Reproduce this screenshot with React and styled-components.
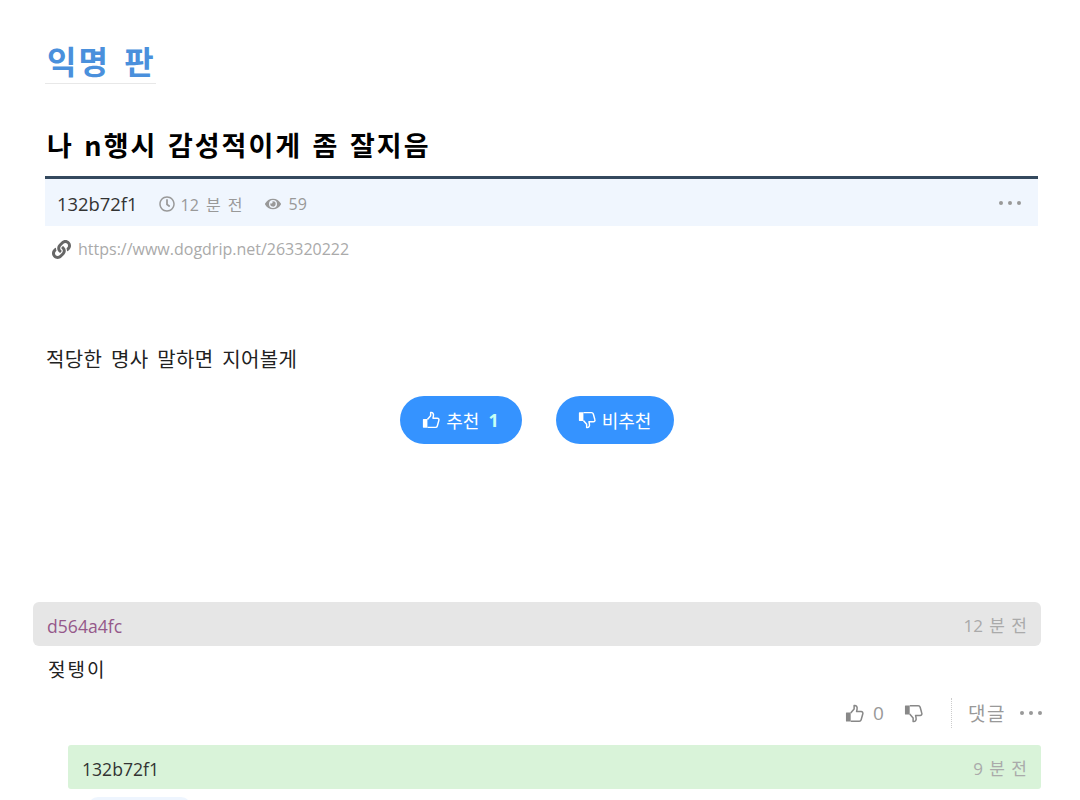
import styled, { createGlobalStyle } from "styled-components";
import { FaRegClock, FaEye, FaLink } from "react-icons/fa";

const GlobalStyle = createGlobalStyle`
  html, body {
    margin: 0;
    padding: 0;
    background: #fff;
  }
  body {
    font-family: "Open Sans", "Noto Sans CJK KR", sans-serif;
    color: #222;
  }
`;

const Page = styled.div`
  width: 1080px;
  height: 800px;
  box-sizing: border-box;
  overflow: hidden;
  padding: 0 39px 0 33px;
`;

const Post = styled.article`
  margin: 0 3px 0 12px;
`;

const BoardTitle = styled.h2`
  display: inline-block;
  margin: 37px 0 0;
  padding: 0 0 0 2px;
  height: 47px;
  box-sizing: border-box;
  border-bottom: 1px solid #e8e8e8;
  font-family: "Noto Sans CJK KR", sans-serif;
  font-size: 32px;
  line-height: 46px;
  font-weight: 700;
  letter-spacing: 2px;
  word-spacing: 5px;
  color: #4a90dc;
`;

const PostTitle = styled.h1`
  margin: 43px 0 0;
  padding-left: 2px;
  font-family: "Noto Sans CJK KR", sans-serif;
  font-size: 27px;
  line-height: 36px;
  font-weight: 700;
  letter-spacing: 2px;
  word-spacing: 2.4px;
  color: #000;
`;

const MetaBar = styled.div`
  display: flex;
  align-items: center;
  height: 47px;
  margin-top: 13px;
  padding: 0 17px 0 12px;
  border-top: 3px solid #34495e;
  background: #f0f6fe;
  color: #999;
  font-size: 16px;
  word-spacing: 3px;
`;

const Author = styled.span`
  padding-top: 2px;
  font-size: 18.4px;
  color: #333;
`;

const MetaItem = styled.span`
  display: inline-flex;
  align-items: center;
  gap: ${(p) => p.$iconGap}px;
  margin-left: ${(p) => p.$gap}px;
  padding-top: 2px;
  svg {
    font-size: 16px;
  }
`;

const Dots = styled.span`
  display: inline-flex;
  gap: 5px;
  margin-left: ${(p) => (p.$push ? "auto" : "0")};
  i {
    width: 4px;
    height: 4px;
    border-radius: 50%;
    background: #999;
  }
`;

const UrlRow = styled.div`
  display: flex;
  align-items: center;
  gap: 7px;
  height: 46px;
  padding-left: 7px;
  font-size: 16px;
  color: #aaa;
  svg {
    font-size: 19px;
    color: #666;
  }
`;

const PostBody = styled.p`
  margin: 74px 0 0;
  padding-left: 1px;
  font-size: 20px;
  line-height: 28px;
  letter-spacing: 0.4px;
  word-spacing: 3px;
  color: #222;
`;

const Votes = styled.div`
  display: flex;
  justify-content: center;
  gap: 34px;
  margin-top: 22px;
  padding-right: 10px;
`;

const VoteButton = styled.button`
  display: inline-flex;
  align-items: center;
  justify-content: center;
  gap: 6px;
  width: ${(p) => p.$width}px;
  height: 48px;
  padding: 0;
  border: 0;
  border-radius: 24px;
  background: #3593ff;
  color: #fff;
  font-family: inherit;
  font-size: 18px;
  b {
    margin-left: 3px;
    color: #c6fff4;
    font-weight: 700;
  }
`;

const Comment = styled.section`
  margin-top: ${(p) => p.$top || 0}px;
  margin-left: ${(p) => p.$indent || 0}px;
`;

const CommentHead = styled.div`
  display: flex;
  align-items: center;
  justify-content: space-between;
  height: 44px;
  padding: 0 14px;
  border-radius: ${(p) => p.$radius}px;
  background: ${(p) => p.$bg};
  font-size: 17px;
  word-spacing: 2px;
  color: #aaa;
`;

const CommentAuthor = styled.span`
  padding-top: 3px;
  font-size: 17.6px;
  color: ${(p) => p.$color};
`;

const CommentText = styled.p`
  margin: 9px 0 0;
  padding-left: 15px;
  font-size: 19px;
  line-height: 30px;
  letter-spacing: 2px;
  color: #222;
`;

const CommentActions = styled.div`
  display: flex;
  align-items: center;
  justify-content: flex-end;
  height: 32px;
  margin: 12px -1px 16px 0;
  color: #999;
  font-size: 19px;
`;

const Count = styled.span`
  margin-left: 9px;
  width: 20px;
`;

const DownVote = styled.span`
  display: inline-flex;
  margin-left: 11px;
`;

const Divider = styled.span`
  height: 30px;
  margin: 0 16px 0 28px;
  border-left: 1px dotted #ccc;
`;

const ReplyLabel = styled.span`
  margin-right: 14px;
  letter-spacing: 1.5px;
`;

const Tag = styled.div`
  width: 103px;
  height: 20px;
  margin: 8px 0 0 20px;
  border-radius: 10px;
  background: #eef5fe;
`;

const ThumbSvg = styled.svg`
  width: ${(p) => p.$size}px;
  height: ${(p) => p.$size}px;
  color: ${(p) => p.$color || "currentColor"};
  transform: ${(p) => (p.$down ? "scaleY(-1)" : "none")};
`;

const Thumb = ({ down, size = 19, color }) => (
  <ThumbSvg viewBox="0 0 20 20" $down={down} $size={size} $color={color}>
    <rect x="1" y="9" width="5" height="9.5" rx="0.6" fill="currentColor" />
    <path
      d="M6 9.5 L9.6 5.2 V1.6 C11.8 1.2 13.2 3 12.7 5.4 L12.2 8 H17 C18.5 8 19.2 9.4 18.7 10.6 L17 16.6 C16.7 17.7 16 18.2 15 18.2 H6"
      fill="none"
      stroke="currentColor"
      strokeWidth="1.6"
      strokeLinejoin="round"
    />
  </ThumbSvg>
);

export default function App() {
  return (
    <Page>
      <GlobalStyle />
      <Post>
        <BoardTitle>익명 판</BoardTitle>
        <PostTitle>나 n행시 감성적이게 좀 잘지음</PostTitle>
        <MetaBar>
          <Author>132b72f1</Author>
          <MetaItem $gap={21} $iconGap={6}>
            <FaRegClock />
            12 분 전
          </MetaItem>
          <MetaItem $gap={22} $iconGap={8}>
            <FaEye />
            59
          </MetaItem>
          <Dots $push>
            <i />
            <i />
            <i />
          </Dots>
        </MetaBar>
        <UrlRow>
          <FaLink />
          https://www.dogdrip.net/263320222
        </UrlRow>
        <PostBody>적당한 명사 말하면 지어볼게</PostBody>
        <Votes>
          <VoteButton $width={122}>
            <Thumb size={18} />
            추천 <b>1</b>
          </VoteButton>
          <VoteButton $width={118}>
            <Thumb size={18} down />
            비추천
          </VoteButton>
        </Votes>
      </Post>
      <Comment $top={158}>
        <CommentHead $bg="#e6e6e6" $radius={6}>
          <CommentAuthor $color="#95588a">d564a4fc</CommentAuthor>
          12 분 전
        </CommentHead>
        <CommentText>젖탱이</CommentText>
        <CommentActions>
          <Thumb color="#888" />
          <Count>0</Count>
          <DownVote>
            <Thumb color="#888" down />
          </DownVote>
          <Divider />
          <ReplyLabel>댓글</ReplyLabel>
          <Dots>
            <i />
            <i />
            <i />
          </Dots>
        </CommentActions>
      </Comment>
      <Comment $indent={35}>
        <CommentHead $bg="#d9f3d9" $radius={3}>
          <CommentAuthor $color="#333">132b72f1</CommentAuthor>
          9 분 전
        </CommentHead>
        <Tag />
      </Comment>
    </Page>
  );
}
